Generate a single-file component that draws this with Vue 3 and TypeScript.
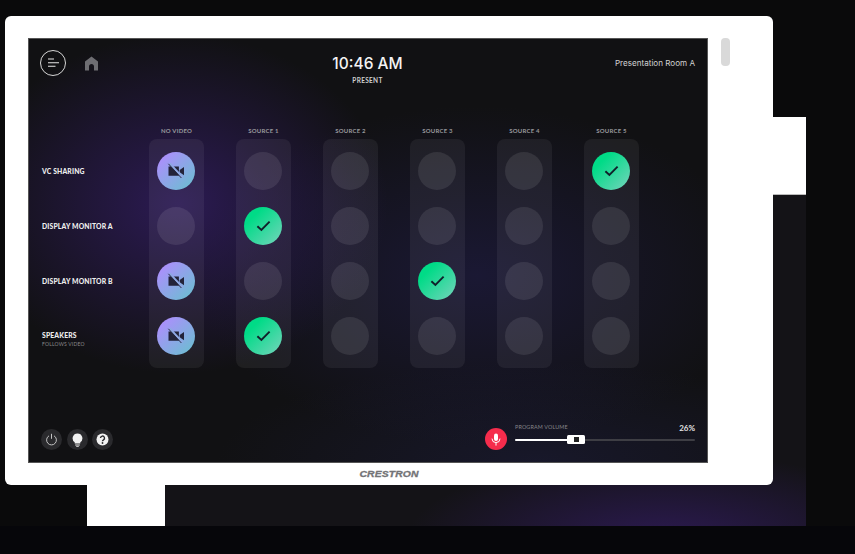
<script setup lang="ts">
type Cell = 'off' | 'video' | 'check'

const sources = ['NO VIDEO', 'SOURCE 1', 'SOURCE 2', 'SOURCE 3', 'SOURCE 4', 'SOURCE 5']

const rows = [
  { name: 'VC SHARING', sub: '', active: 5 },
  { name: 'DISPLAY MONITOR A', sub: '', active: 1 },
  { name: 'DISPLAY MONITOR B', sub: '', active: 3 },
  { name: 'SPEAKERS', sub: 'FOLLOWS VIDEO', active: 1 }
]

// no video column is lit on every row except monitor a
function cellType(col: number, row: number): Cell {
  if (col === 0) return row === 1 ? 'off' : 'video'
  if (rows[row].active === col) return 'check'
  return 'off'
}
</script>

<template>
  <div class="stage">
    <div class="back">
      <div class="back-inner"></div>
    </div>

    <div class="tablet">
      <div class="body">
        <div class="screen">
          <header class="top">
            <div class="top-left">
              <button class="menu">
                <svg width="12" height="10" viewBox="0 0 12 10">
                  <path d="M0 1h6M0 4.7h11M0 8.3h7.5" stroke="#e8e8e8" stroke-width="1.1" fill="none" />
                </svg>
              </button>
              <svg class="home" width="15" height="15" viewBox="0 0 15 15">
                <path d="M7.5 0.6 14 5.6V14.4H10V10.6C10 9 9 7.9 7.5 7.9S5 9 5 10.6V14.4H1V5.6Z" fill="#6e6e72" />
              </svg>
            </div>
            <div class="clock">
              <div class="time">10:46 AM</div>
              <div class="mode">PRESENT</div>
            </div>
            <div class="room">Presentation Room A</div>
          </header>

          <section class="matrix">
            <div class="labels">
              <div v-for="r in rows" :key="r.name" class="label" :class="{ 'has-sub': r.sub }">
                <div class="label-name">{{ r.name }}</div>
                <div v-if="r.sub" class="label-sub">{{ r.sub }}</div>
              </div>
            </div>
            <div v-for="(s, c) in sources" :key="s" class="col">
              <div class="col-title">{{ s }}</div>
              <div class="card">
                <div v-for="(r, i) in rows" :key="r.name" class="dot" :class="cellType(c, i)">
                  <svg v-if="cellType(c, i) === 'video'" width="18" height="16" viewBox="0 0 18 16">
                    <path d="M1.5 3.4h10.4v9.4H1.5zM12.7 7l4.3-3v8.2l-4.3-3z" fill="#23233a" />
                    <path d="M2.6 0.4 15.6 14.6" stroke="#8fa8e4" stroke-width="2.2" />
                    <path d="M1.4 0.8 14.4 15" stroke="#23233a" stroke-width="0.9" />
                  </svg>
                  <svg v-if="cellType(c, i) === 'check'" width="15" height="12" viewBox="0 0 15 12">
                    <path d="M1.4 6.2 5.4 10 13.6 1.6" stroke="#10202a" stroke-width="1.9" fill="none" />
                  </svg>
                </div>
              </div>
            </div>
          </section>

          <footer class="bottom">
            <div class="tools">
              <div class="tool">
                <svg width="13" height="13" viewBox="0 0 13 13">
                  <path d="M4 2.8a4.9 4.9 0 1 0 5 0M6.5 0.8v5" stroke="#c4c4c4" stroke-width="1" fill="none" />
                </svg>
              </div>
              <div class="tool">
                <svg width="11" height="14" viewBox="0 0 11 14">
                  <path d="M5.5 0.4a4.9 4.9 0 0 1 2.8 8.9V10.4H2.7V9.3A4.9 4.9 0 0 1 5.5 0.4ZM3.2 11.4h4.6v1H3.2zM4.2 12.9h2.6v.9H4.2z" fill="#f2f2f2" />
                </svg>
              </div>
              <div class="tool">
                <svg width="13" height="13" viewBox="0 0 13 13">
                  <circle cx="6.5" cy="6.5" r="6" fill="#f2f2f2" />
                  <path d="M4.5 5.1a2 2 0 1 1 3 1.7C6.8 7.2 6.5 7.5 6.5 8.2" stroke="#2a2a2d" stroke-width="1.4" fill="none" />
                  <circle cx="6.5" cy="10" r=".9" fill="#2a2a2d" />
                </svg>
              </div>
            </div>
            <div class="volume">
              <div class="mic">
                <svg width="10" height="13" viewBox="0 0 10 13">
                  <rect x="3" y="0.5" width="4" height="7.5" rx="2" fill="#fff" />
                  <path d="M1 5.6a4 4 0 0 0 8 0M5 9.6v3" stroke="#fff" stroke-width="1" fill="none" />
                </svg>
              </div>
              <div class="slider-box">
                <div class="slider-head">
                  <span class="slider-name">PROGRAM VOLUME</span>
                  <span class="slider-val">26%</span>
                </div>
                <div class="track">
                  <div class="fill" :style="{ width: '30%' }"></div>
                  <div class="thumb"><i></i></div>
                </div>
              </div>
            </div>
          </footer>
        </div>
        <div class="pill"></div>
      </div>
      <div class="brand">CRESTRON</div>
    </div>
  </div>
</template>

<style>
html,
body {
  margin: 0;
  background: #09090a;
}
</style>

<style scoped>
.stage {
  position: relative;
  width: 855px;
  height: 554px;
  overflow: hidden;
  background: linear-gradient(#0a0a0b 0, #0a0a0b 526px, #06060a 526px);
  font-family: Lato, "Open Sans", sans-serif;
}

.back {
  position: absolute;
  left: 87px;
  top: 117px;
  width: 719px;
  height: 409px;
  background: #fff;
  display: flex;
  flex-direction: column;
  align-items: flex-end;
  justify-content: flex-end;
}

.back-inner {
  width: 641px;
  height: 332px;
  box-sizing: border-box;
  border-top: 1px solid #bbb;
  background:
    radial-gradient(ellipse 260px 90px at 78% 105%, #2c1a52 0%, rgba(44, 26, 82, 0) 100%),
    #141317;
}

.tablet {
  position: absolute;
  left: 5px;
  top: 16px;
  width: 768px;
  height: 469px;
  background: #fff;
  border-radius: 6px;
  box-sizing: border-box;
  padding: 22px 0 0 23px;
}

.body {
  display: flex;
  gap: 13px;
}

.screen {
  width: 680px;
  height: 425px;
  box-sizing: border-box;
  padding: 11px 12px 12px 11px;
  border: 1px solid #555;
  display: flex;
  flex-direction: column;
  color: #fff;
  background:
    radial-gradient(ellipse 210px 170px at 22% 39%, rgba(54, 30, 108, 0.72) 0%, rgba(54, 30, 108, 0) 100%),
    radial-gradient(ellipse 280px 170px at 66% 56%, rgba(34, 30, 78, 0.55) 0%, rgba(34, 30, 78, 0) 100%),
    radial-gradient(ellipse 320px 100px at 75% 100%, rgba(26, 26, 50, 0.75) 0%, rgba(26, 26, 50, 0) 100%),
    #111113;
}

.pill {
  width: 9px;
  height: 28px;
  border-radius: 4px;
  background: #d9d9d9;
}

.brand {
  width: 768px;
  margin: 6px 0 0 -23px;
  text-align: center;
  font-family: "Liberation Sans", Arial, sans-serif;
  font-weight: 700;
  font-style: italic;
  font-size: 8.5px;
  letter-spacing: 0.1px;
  color: #737376;
  -webkit-text-stroke: 0.3px #737376;
  transform: scaleX(1.22);
}

.top {
  display: grid;
  grid-template-columns: 1fr auto 1fr;
  align-items: start;
  height: 73px;
}

.top-left {
  display: flex;
  align-items: center;
  gap: 18px;
}

.menu {
  width: 26px;
  height: 26px;
  box-sizing: border-box;
  padding: 0 0 0 2px;
  border: 1px solid #d6d6d6;
  border-radius: 50%;
  background: none;
  display: flex;
  align-items: center;
  justify-content: center;
}

.home {
  display: block;
}

.clock {
  text-align: center;
}

.time {
  font-family: Inter, sans-serif;
  font-size: 15.5px;
  line-height: 28px;
  font-weight: 500;
  color: #f4f4f4;
}

.mode {
  font-size: 6.5px;
  font-weight: 700;
  letter-spacing: 0.3px;
  line-height: 10px;
  margin-top: -2px;
  color: #cfcfcf;
}

.room {
  justify-self: end;
  font-family: Inter, sans-serif;
  font-size: 8.1px;
  line-height: 26px;
  color: #d2d2d2;
}

.matrix {
  display: flex;
  gap: 32px;
  margin-left: 2px;
}

.labels {
  width: 75px;
  padding-top: 29px;
  display: flex;
  flex-direction: column;
  gap: 17px;
}

.label {
  height: 38px;
  box-sizing: border-box;
  padding-top: 1px;
  display: flex;
  flex-direction: column;
  justify-content: center;
}

.label.has-sub {
  padding-top: 6px;
}

.label-name {
  font-size: 6.8px;
  font-weight: 900;
  letter-spacing: 0.15px;
  line-height: 9px;
  white-space: nowrap;
  color: #eee;
}

.label-sub {
  font-size: 5px;
  letter-spacing: 0.2px;
  line-height: 8px;
  color: #8a8a8c;
  white-space: nowrap;
}

.col {
  width: 55px;
}

.col-title {
  height: 16px;
  font-size: 6px;
  font-weight: 700;
  letter-spacing: 0.2px;
  line-height: 16px;
  text-align: center;
  white-space: nowrap;
  color: #98989c;
}

.card {
  box-sizing: border-box;
  height: 229px;
  padding: 13px 8px;
  border-radius: 8px;
  background: rgba(255, 255, 255, 0.06);
  display: flex;
  flex-direction: column;
  gap: 17px;
}

.dot {
  width: 38px;
  height: 38px;
  border-radius: 50%;
  display: flex;
  align-items: center;
  justify-content: center;
}

.dot.off {
  background: rgba(255, 255, 255, 0.09);
}

.dot.video {
  background: linear-gradient(135deg, #ac8ffc 12%, #70bbd4 88%);
}

.dot.check {
  background: linear-gradient(135deg, #00db87 25%, #67d5b5 90%);
}

.bottom {
  margin-top: auto;
  display: flex;
  align-items: flex-end;
  justify-content: space-between;
}

.tools {
  display: flex;
  gap: 4.5px;
  margin-left: 1px;
}

.tool {
  width: 21px;
  height: 21px;
  border-radius: 50%;
  background: #2a2a2d;
  display: flex;
  align-items: center;
  justify-content: center;
}

.volume {
  display: flex;
  align-items: flex-end;
  gap: 8px;
}

.mic {
  width: 22px;
  height: 22px;
  border-radius: 50%;
  background: #f52c4c;
  display: flex;
  align-items: center;
  justify-content: center;
}

.slider-box {
  width: 180px;
  padding-bottom: 9px;
}

.slider-head {
  display: flex;
  justify-content: space-between;
  align-items: flex-end;
  margin-bottom: 6px;
}

.slider-name {
  font-size: 5.4px;
  letter-spacing: 0.15px;
  line-height: 8px;
  position: relative;
  top: -2px;
  color: #85858a;
}

.slider-val {
  font-size: 8px;
  font-weight: 700;
  line-height: 10px;
  color: #e4e4e4;
}

.track {
  position: relative;
  height: 2px;
  background: #3e3e44;
  border-radius: 1px;
}

.fill {
  height: 2px;
  background: #fff;
  border-radius: 1px;
}

.thumb {
  position: absolute;
  left: 52px;
  top: -4px;
  width: 18px;
  height: 9px;
  background: #fff;
  border-radius: 1.5px;
  display: flex;
  align-items: center;
  justify-content: center;
}

.thumb i {
  display: block;
  width: 5px;
  height: 5px;
  background: #222;
}
</style>
